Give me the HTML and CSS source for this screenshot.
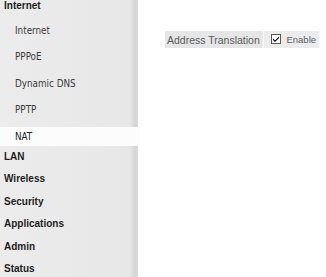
FILE: index.html
```html
<!DOCTYPE html>
<html lang="en">
<head>
    <meta charset="UTF-8">
    <meta name="viewport" content="width=device-width, initial-scale=1.0">
    <title>NAT</title>
    <link rel="stylesheet" href="styles.css">
</head>
<body>

    <div class="page">
        <div class="menu">
            <div class="group open">Internet</div>
            <div class="submenu">
                <div class="subitem">Internet</div>
                <div class="subitem">PPPoE</div>
                <div class="subitem">Dynamic DNS</div>
                <div class="subitem">PPTP</div>
                <div class="subitem active">NAT</div>
            </div>
            <div class="group">LAN</div>
            <div class="group">Wireless</div>
            <div class="group">Security</div>
            <div class="group">Applications</div>
            <div class="group">Admin</div>
            <div class="group">Status</div>
        </div>

        <div class="content">
            <table class="settings">
                <tr>
                    <td class="label">Address Translation</td>
                    <td class="value">
                        <span class="check">
                            <svg width="10" height="10" viewBox="0 0 10 10">
                                <rect x="0.5" y="0.5" width="9" height="9" fill="#fff" stroke="#555"/>
                                <path d="M2 4.5 L4 6.5 L8 2.5 L8 4 L4 8 L2 6 Z" fill="#000"/>
                            </svg>
                        </span>
                        Enable
                    </td>
                </tr>
            </table>
        </div>
    </div>

</body>
</html>
```

FILE: styles.css
```css
body {
    margin: 0;
    background-color: #fff;
    font-family: Tahoma, 'DejaVu Sans', Verdana, sans-serif;
    overflow: hidden;
}

.page {
    display: flex;
    height: 277px;
}

.menu {
    width: 138px;
    flex-shrink: 0;
    background: linear-gradient(to right, #ececec 0, #e7e7e7 94%, #d4d4d4 98%, #dcdcdc 100%);
    display: flex;
    flex-direction: column;
}

.group {
    height: 22.5px;
    line-height: 22px;
    padding-left: 4px;
    font-family: 'Liberation Sans', Arial, sans-serif;
    font-size: 10px;
    font-weight: bold;
    color: #1e1e1e;
    flex-shrink: 0;
}

.group.open {
    margin-top: -5px;
    height: 22px;
}

.submenu {
    display: flex;
    flex-direction: column;
    gap: 7.5px;
    padding-top: 3.5px;
}

.subitem {
    height: 19px;
    line-height: 19px;
    padding-left: 15px;
    font-family: 'DejaVu Sans Condensed', 'DejaVu Sans', sans-serif;
    font-size: 9.8px;
    color: #3a3a3a;
}

.subitem.active {
    background-color: #fcfcfc;
    margin-right: -2px;
    color: #222;
}

.content {
    padding: 30px 0 0 26px;
}

.settings {
    border-collapse: separate;
    border-spacing: 1px;
    font-family: 'Liberation Sans', Arial, sans-serif;
}

.settings td {
    height: 17px;
    padding: 0 3px 0 2px;
    white-space: nowrap;
}

.label {
    background-color: #e6e6e6;
    color: #5a5a5a;
    font-size: 10.5px;
}

.value {
    background-color: #ececec;
    color: #5b6270;
    font-size: 9.5px;
}

.check {
    display: inline-block;
    vertical-align: -1px;
    margin: 0 3px 0 5px;
    height: 10px;
}

.check svg {
    display: block;
}
```
